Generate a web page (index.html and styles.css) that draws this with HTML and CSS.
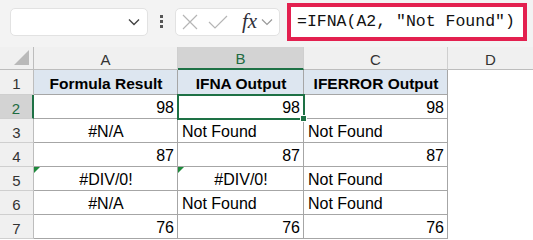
FILE: index.html
```html
<!DOCTYPE html>
<html lang="en">
<head>
  <meta charset="UTF-8">
  <title>IFNA</title>
  <link rel="stylesheet" href="styles.css">
</head>
<body>
  <div class="toolbar">
    <div class="name-box">
      <svg class="chev" width="12" height="8" viewBox="0 0 12 8"><path d="M1 1.5 L6 6.5 L11 1.5" fill="none" stroke="#444" stroke-width="1.4"/></svg>
    </div>
    <div class="dots"><span></span><span></span><span></span></div>
    <div class="fx-box">
      <svg width="16" height="16" viewBox="0 0 16 16"><path d="M1 1 L15 15 M15 1 L1 15" stroke="#b5b5b5" stroke-width="1.2"/></svg>
      <svg width="20" height="16" viewBox="0 0 20 16"><path d="M1 8 L7 14 L19 2" fill="none" stroke="#b5b5b5" stroke-width="1.2"/></svg>
      <span class="fx">fx</span>
      <svg width="12" height="8" viewBox="0 0 12 8"><path d="M1 1.5 L6 6.5 L11 1.5" fill="none" stroke="#999" stroke-width="1.2"/></svg>
    </div>
    <div class="formula">=IFNA(A2, "Not Found")</div>
  </div>

  <div class="sheet">
    <div class="hd corner"><span class="tri"></span></div>
    <div class="hd col">A</div>
    <div class="hd col sel">B</div>
    <div class="hd col">C</div>
    <div class="hd col last">D</div>

    <div class="hd row">1</div>
    <div class="c title">Formula Result</div>
    <div class="c title">IFNA Output</div>
    <div class="c title">IFERROR Output</div>
    <div class="c empty"></div>

    <div class="hd row sel">2</div>
    <div class="c num">98</div>
    <div class="c num active">98<span class="handle"></span></div>
    <div class="c num">98</div>
    <div class="c empty"></div>

    <div class="hd row">3</div>
    <div class="c mid">#N/A</div>
    <div class="c">Not Found</div>
    <div class="c">Not Found</div>
    <div class="c empty"></div>

    <div class="hd row">4</div>
    <div class="c num">87</div>
    <div class="c num">87</div>
    <div class="c num">87</div>
    <div class="c empty"></div>

    <div class="hd row">5</div>
    <div class="c mid flag">#DIV/0!</div>
    <div class="c mid flag">#DIV/0!</div>
    <div class="c">Not Found</div>
    <div class="c empty"></div>

    <div class="hd row">6</div>
    <div class="c mid">#N/A</div>
    <div class="c">Not Found</div>
    <div class="c">Not Found</div>
    <div class="c empty"></div>

    <div class="hd row">7</div>
    <div class="c num">76</div>
    <div class="c num">76</div>
    <div class="c num">76</div>
    <div class="c empty"></div>
  </div>
</body>
</html>
```

FILE: styles.css
```css
body {
  margin: 0;
  width: 533px;
  height: 240px;
  overflow: hidden;
  background: #fff;
  font-family: 'Liberation Sans', Arial, sans-serif;
}
/* barra de formulas */
.toolbar {
  height: 47px;
  background: #f3f3f3;
  display: flex;
  align-items: center;
  box-sizing: border-box;
  padding: 0 6px 4px 10px;
}
.name-box {
  width: 138px;
  height: 28px;
  background: #fff;
  border: 1px solid #e2e2e2;
  border-radius: 5px;
  box-sizing: border-box;
  display: flex;
  align-items: center;
  justify-content: flex-end;
  padding-right: 7px;
}
.dots {
  width: 27px;
  display: flex;
  flex-direction: column;
  align-items: center;
  gap: 2px;
}
.dots span {
  width: 3px;
  height: 3px;
  background: #555;
}
.fx-box {
  width: 105px;
  height: 28px;
  background: #fff;
  border: 1px solid #e2e2e2;
  border-radius: 5px;
  box-sizing: border-box;
  display: flex;
  align-items: center;
  gap: 10px;
  padding-left: 6px;
}
.fx {
  font-family: 'Liberation Serif', 'Times New Roman', serif;
  font-style: italic;
  font-size: 21px;
  color: #2f2f3a;
  margin-left: 4px;
  margin-right: -6px;
}
.formula {
  margin-left: 7px;
  flex: 1;
  height: 38px;
  border: 4px solid #e3204f;
  background: #fff;
  box-sizing: border-box;
  display: flex;
  align-items: center;
  padding-left: 6px;
  font-family: 'Liberation Mono', 'Courier New', monospace;
  font-size: 16.5px;
  color: #111;
}
/* hoja */
.sheet {
  display: grid;
  grid-template-columns: 34px 144px 126px 144px 85px;
  grid-template-rows: 23px 25px repeat(6, 24px);
}
.hd {
  background: #f0f0f0;
  color: #333;
  font-size: 15px;
  display: flex;
  align-items: center;
  justify-content: center;
  box-sizing: border-box;
  border-right: 1px solid #cfcfcf;
  border-bottom: 1px solid #cfcfcf;
}
.corner {
  position: relative;
  border-bottom-color: #bdbdbd;
  border-right-color: #bdbdbd;
}
.tri {
  position: absolute;
  right: 4px;
  bottom: 4px;
  width: 0;
  height: 0;
  border-left: 15px solid transparent;
  border-bottom: 15px solid #b9b9b9;
}
.col {
  border-bottom-color: #bdbdbd;
  padding-top: 2px;
}
.col.last {
  border-right: none;
}
.row {
  border-right-color: #bdbdbd;
  padding-top: 3px;
}
.hd.sel {
  background: #d3d3d3;
  color: #1e6b41;
}
.col.sel {
  border-bottom: 2px solid #1e7145;
}
.row.sel {
  border-right: 2px solid #1e7145;
}
.c {
  position: relative;
  box-sizing: border-box;
  border-right: 1px solid #a6a6a6;
  border-bottom: 1px solid #a6a6a6;
  font-size: 16px;
  color: #000;
  display: flex;
  align-items: flex-end;
  line-height: 18px;
  padding: 0 3px 1px 4px;
  white-space: nowrap;
}
.c.title {
  background: #dde6f0;
  font-weight: bold;
  font-size: 15.5px;
  justify-content: center;
}
.c.num {
  justify-content: flex-end;
}
.c.mid {
  justify-content: center;
}
.c.empty {
  border: none;
}
.flag::before {
  content: '';
  position: absolute;
  top: 0;
  left: 0;
  border-top: 6px solid #1e8a3c;
  border-right: 6px solid transparent;
}
.active {
  outline: 2px solid #1e7145;
  outline-offset: -1px;
  z-index: 2;
}
.handle {
  position: absolute;
  right: -4px;
  bottom: -4px;
  width: 5px;
  height: 5px;
  background: #1e7145;
  border: 1px solid #fff;
}
```
